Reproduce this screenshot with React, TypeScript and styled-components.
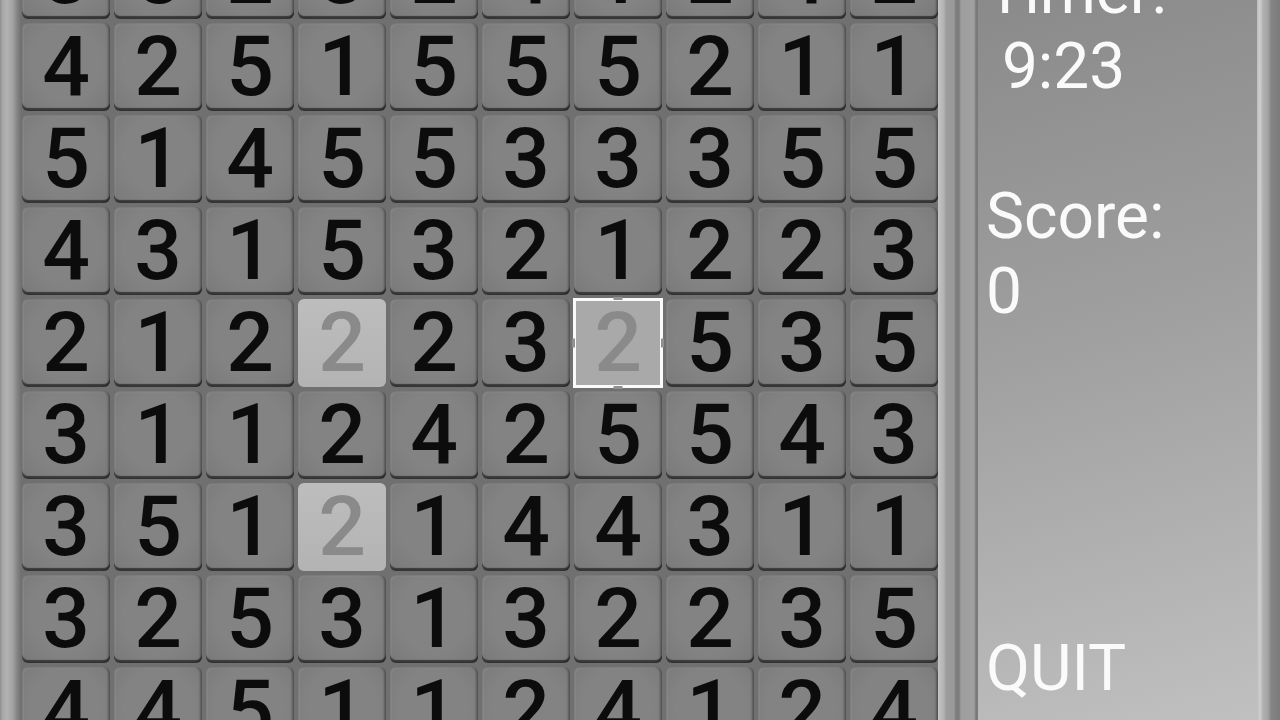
import React from "react";
import styled, { createGlobalStyle, css } from "styled-components";

const Global = createGlobalStyle`
  html, body { margin: 0; padding: 0; background: #808080; overflow: hidden; }
  #root { width: 1280px; height: 720px; }
`;

const Screen = styled.div`
  display: flex;
  width: 1280px;
  height: 720px;
  overflow: hidden;
  font-family: Roboto, "Liberation Sans", sans-serif;
`;

const LeftFrame = styled.div`
  flex: 0 0 22px;
  background: linear-gradient(
    to right,
    #8a8a8a 0px,
    #a6a6a6 2px,
    #b2b2b2 7px,
    #a2a2a2 13px,
    #858585 17px,
    #6c6c6c 22px
  );
`;

const Board = styled.div`
  flex: 0 0 916px;
  height: 720px;
  overflow: hidden;
  background: #707070;
`;

const Grid = styled.div`
  display: grid;
  grid-template-columns: repeat(10, 88px);
  grid-auto-rows: 88px;
  gap: 4px;
  margin-top: -69px;
`;

type CellKind = "normal" | "lit" | "selected";

const Cell = styled.div<{ $kind: CellKind }>`
  position: relative;
  display: flex;
  align-items: center;
  justify-content: center;
  font-size: 84px;
  line-height: 88px;
  font-weight: 500;
  color: #0c0c0c;
  border-radius: 6px;
  background: radial-gradient(ellipse at 50% 45%, #838383 55%, #797979 100%);
  box-shadow: inset 0 -3px 1px rgba(0, 0, 0, 0.55),
    inset -2px 0 2px rgba(0, 0, 0, 0.3), inset 2px 2px 1px rgba(255, 255, 255, 0.06);

  ${(p) =>
    p.$kind === "lit" &&
    css`
      background: linear-gradient(to bottom, #bdbdbd, #b3b3b3);
      color: #8a8a8a;
      box-shadow: none;
    `}

  ${(p) =>
    p.$kind === "selected" &&
    css`
      background: #a9a9a9;
      color: #8a8a8a;
      border-radius: 0;
      box-shadow: none;
      outline: 3px solid #fafafa;
      outline-offset: -2px;
      &::before,
      &::after {
        content: "";
        position: absolute;
      }
      &::before {
        left: 50%;
        top: -2px;
        width: 9px;
        height: calc(100% + 4px);
        transform: translateX(-50%);
        background: linear-gradient(
          to bottom,
          #909090 0,
          #909090 3px,
          transparent 3px,
          transparent calc(100% - 3px),
          #909090 calc(100% - 3px)
        );
      }
      &::after {
        top: 50%;
        left: -2px;
        height: 9px;
        width: calc(100% + 4px);
        transform: translateY(-50%);
        background: linear-gradient(
          to right,
          #909090 0,
          #909090 3px,
          transparent 3px,
          transparent calc(100% - 3px),
          #909090 calc(100% - 3px)
        );
      }
    `}
`;

const Divider = styled.div`
  flex: 0 0 40px;
  background: linear-gradient(
    to right,
    #c4c4c4 0px,
    #b2b2b2 6px,
    #9c9c9c 8px,
    #999 16px,
    #7c7c7c 18px,
    #7c7c7c 21px,
    #9e9e9e 23px,
    #a0a0a0 36px,
    #7a7a7a 38px,
    #7a7a7a 40px
  );
`;

const Panel = styled.div`
  flex: 0 0 279px;
  display: flex;
  flex-direction: column;
  padding: 0 0 14px 8px;
  box-sizing: border-box;
  height: 720px;
  background: linear-gradient(165deg, #8a8a8a 0%, #9f9f9f 45%, #c0c0c0 100%);
  color: #fafafa;
  font-size: 64px;
  line-height: 75px;
  font-weight: 400;
`;

const Stats = styled.div`
  margin-top: -46px;
  display: flex;
  flex-direction: column;
`;

const Line = styled.div`
  white-space: pre;
  height: 75px;
`;

const Quit = styled.div`
  margin-top: auto;
  height: 75px;
  cursor: pointer;
`;

const RightFrame = styled.div`
  flex: 0 0 24px;
  background: linear-gradient(
    to right,
    #bdbdbd 0px,
    #cfcfcf 3px,
    #b0b0b0 6px,
    #a4a4a4 11px,
    #858585 14px,
    #7a7a7a 24px
  );
`;

const rows: string[] = [
  "3523241242",
  "4251555211",
  "5145533355",
  "4315321223",
  "2122232535",
  "3112425543",
  "3512144311",
  "3253132235",
  "4451124124",
];

const kindAt = (r: number, c: number): CellKind => {
  if (r === 4 && c === 6) return "selected";
  if ((r === 4 || r === 6) && c === 3) return "lit";
  return "normal";
};

export default function App() {
  return (
    <>
      <Global />
      <Screen>
        <LeftFrame />
        <Board>
          <Grid>
            {rows.map((row, r) =>
              row.split("").map((d, c) => (
                <Cell key={`${r}-${c}`} $kind={kindAt(r, c)}>
                  {d}
                </Cell>
              ))
            )}
          </Grid>
        </Board>
        <Divider />
        <Panel>
          <Stats>
            <Line>Timer:</Line>
            <Line>{" 9:23"}</Line>
            <Line>{" "}</Line>
            <Line>Score:</Line>
            <Line>0</Line>
          </Stats>
          <Quit>QUIT</Quit>
        </Panel>
        <RightFrame />
      </Screen>
    </>
  );
}
